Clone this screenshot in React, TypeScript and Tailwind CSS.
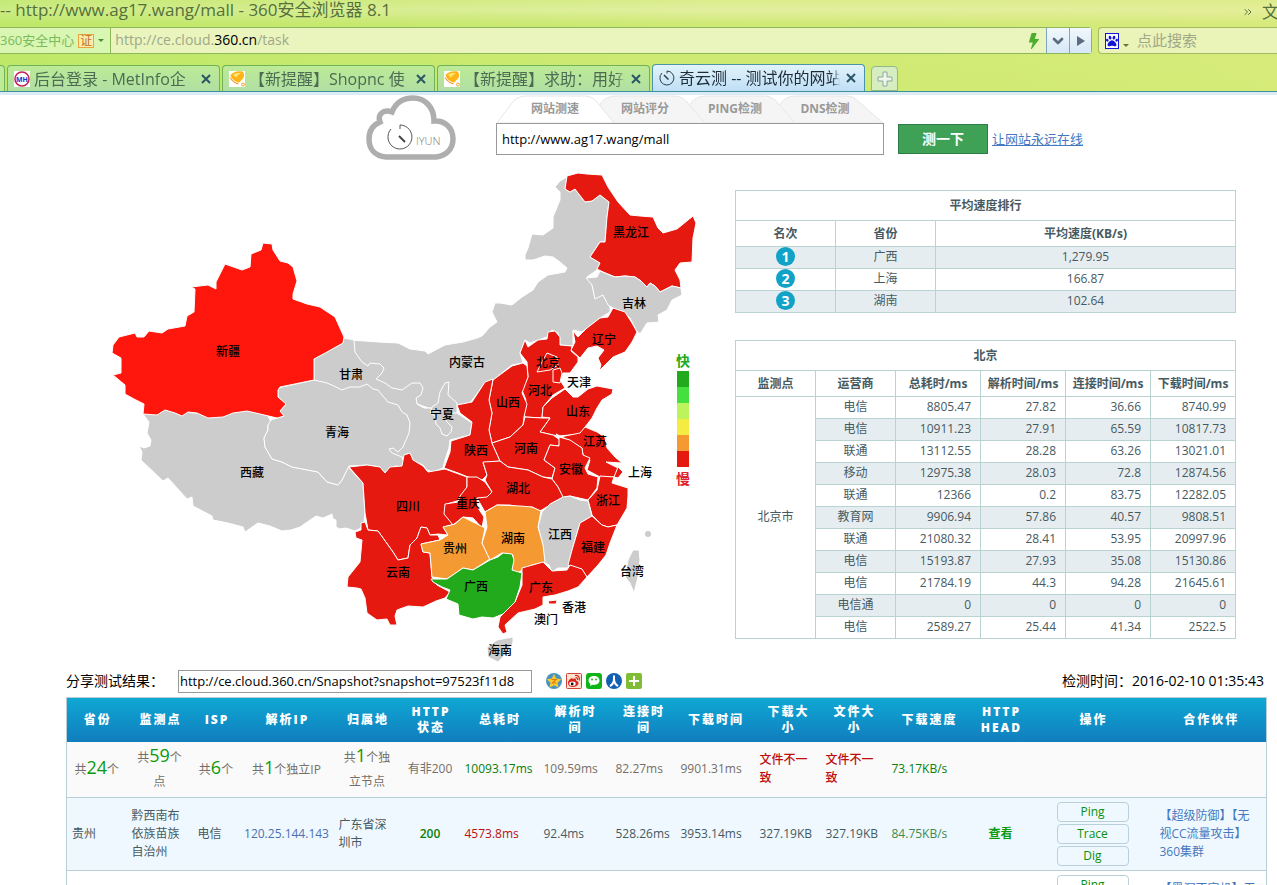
import type { ReactNode } from "react"
import { FaPaw } from "react-icons/fa"
import { BsLightningFill } from "react-icons/bs"
import { ChevronDown, ChevronsRight } from "lucide-react"

const RED = "#e61910"
const GRAY = "#cccccc"
const ORANGE = "#f59a32"
const GREEN = "#22aa1c"

// order matters: later provinces are painted over earlier ones
const provinces = [
  { id: "内蒙古", fill: GRAY, points: "344,340 365,341 378,342 398,343 410,349 425,351 428,354 445,345 463,342 477,338 482,336 490,327 497,322 492,312 495,303 500,303 512,305 522,297 533,290 538,282 548,275 565,272 567,268 560,262 553,257 545,256 533,260 525,260 525,255 528,248 532,234 543,235 553,228 553,217 560,200 560,192 555,187 560,181 567,177 565,189 570,192 575,189 578,193 585,202 592,201 600,195 609,202 607,217 605,242 600,242 590,257 600,263 597,270 587,277 592,285 595,297 603,295 610,307 610,312 600,318 582,332 573,330 573,346 560,345 558,333 552,330 547,337 530,343 525,340 520,353 523,363 512,365 497,377 493,380 485,383 470,403 458,405 440,412 420,405 400,395 370,380 354,360" },
  { id: "甘肃", fill: GRAY, points: "314,359 327,352 343,343 344,338 354,340 355,352 362,362 368,366 370,363 380,364 384,368 382,373 376,379 385,383 392,388 402,390 412,383 420,383 423,388 421,395 416,398 417,404 424,408 432,408 446,410 457,404 457,413 472,423 470,435 450,440 449,448 445,460 443,468 433,472 427,470 423,465 412,460 408,453 403,457 396,466 385,450 380,410 314,380" },
  { id: "西藏", fill: GRAY, points: "143,414 165,410 182,412 208,414 247,409 268,416 271,422 268,425 268,430 264,438 265,447 272,459 282,462 292,467 318,472 327,482 338,485 342,480 348,467 363,483 365,513 364,522 361,528 355,531 346,528 340,529 336,527 336,520 333,519 332,514 323,518 316,516 300,527 291,530 282,531 270,526 258,523 245,532 243,527 228,523 213,520 212,516 193,506 192,497 187,499 178,489 168,478 163,481 141,460 142,452 139,446 144,448 150,446 151,440 147,433 149,422" },
  { id: "青海", fill: GRAY, points: "314,380 327,383 334,386 342,390 350,387 360,387 367,384 373,389 378,390 382,395 388,402 398,405 402,412 407,415 410,423 409,433 403,447 398,452 393,448 389,449 392,453 402,457 404,463 402,467 395,466 385,473 380,467 367,465 349,466 342,480 338,485 327,482 318,472 292,467 282,462 272,459 265,447 264,438 268,430 268,425 271,420 284,416 280,411 286,404 278,397 278,389 282,387" },
  { id: "宁夏", fill: GRAY, points: "445,383 449,382 448,395 457,403 457,413 450,413 445,417 447,422 452,427 451,432 447,436 442,434 440,428 436,424 435,416 430,413 432,407 438,403 440,392" },
  { id: "新疆", fill: "#ff160d", points: "263,243 272,244 273,250 280,261 288,263 293,267 297,281 293,294 293,299 307,304 320,307 335,317 344,337 343,343 327,352 314,359 314,380 280,387 278,390 278,397 286,404 280,411 284,416 277,418 260,414 247,411 233,413 223,417 208,418 197,413 188,412 182,416 175,413 165,410 157,415 143,414 144,404 134,399 125,394 125,385 113,375 121,373 121,358 112,353 113,345 119,337 135,333 137,337 144,337 149,331 162,333 168,329 185,326 187,316 194,312 195,289 191,287 208,285 216,289 216,282 225,264 242,270 250,267 251,254 261,250" },
  { id: "黑龙江", fill: RED, points: "567,176 578,173 587,174 602,175 608,187 618,202 630,215 640,216 653,217 658,228 663,233 677,229 693,216 696,223 693,238 692,262 680,263 675,270 680,280 681,288 672,286 660,292 655,286 650,283 647,287 641,281 635,277 625,276 615,277 603,272 597,269 600,263 590,257 600,242 605,242 607,217 609,202 600,195 592,201 585,202 578,193 575,189 570,192 565,189" },
  { id: "吉林", fill: GRAY, points: "600,271 615,277 625,276 635,277 641,281 647,287 650,283 655,286 660,292 672,286 681,288 682,295 672,300 667,310 658,315 659,322 647,323 640,334 636,330 630,318 623,312 613,308 608,305 603,295 595,299 592,285 586,278 597,277" },
  { id: "辽宁", fill: RED, points: "613,308 625,312 632,323 637,332 632,342 625,352 613,357 599,371 601,365 598,358 604,350 597,346 588,348 580,358 571,350 575,342 573,331 578,337 587,328 600,318 608,317" },
  { id: "河北", fill: RED, points: "525,340 528,347 538,340 547,339 548,332 555,331 560,337 560,345 572,346 571,351 578,357 578,362 570,373 563,373 560,380 565,388 553,395 543,407 542,418 525,417 523,410 526,400 522,390 528,377 527,362 520,353" },
  { id: "北京", fill: RED, points: "547,353 543,360 537,372 550,370 558,365 557,357" },
  { id: "天津", fill: RED, points: "553,370 560,368 562,373 560,383 553,382" },
  { id: "山西", fill: RED, points: "523,363 527,366 528,377 522,393 527,404 524,417 523,425 510,437 492,443 489,430 492,413 489,400 493,380 497,377 512,366" },
  { id: "陕西", fill: RED, points: "493,379 485,382 472,402 457,405 460,413 472,422 470,435 451,441 450,452 444,468 458,473 468,477 482,480 487,475 483,463 500,461 492,443 489,430 492,413 489,400" },
  { id: "山东", fill: RED, points: "543,407 552,398 565,389 573,397 578,397 588,389 597,386 613,389 612,394 602,400 597,408 592,418 585,427 580,435 570,435 558,436 553,435 540,432 550,418 542,417" },
  { id: "河南", fill: RED, points: "525,417 542,418 550,418 540,432 553,435 560,440 559,446 550,445 544,460 555,468 552,478 543,477 528,470 508,467 500,461 492,443 510,437 523,425" },
  { id: "江苏", fill: RED, points: "556,434 560,437 580,433 585,427 597,432 605,437 607,448 615,457 622,463 606,462 618,468 615,477 600,477 587,470 590,460 583,455 582,448 570,441" },
  { id: "安徽", fill: RED, points: "559,437 570,440 582,448 583,455 590,458 585,468 588,474 598,477 597,488 588,500 570,496 563,498 558,487 552,479 555,468 544,460 550,445 559,446" },
  { id: "湖北", fill: RED, points: "483,462 500,461 508,467 528,470 543,477 552,479 558,487 563,497 555,502 540,511 532,507 523,508 510,505 497,505 485,512 477,498 492,492 485,480 487,475" },
  { id: "四川", fill: RED, points: "349,467 367,465 380,467 385,473 390,467 402,466 404,455 410,453 413,460 423,466 428,472 445,469 467,477 467,487 460,500 447,504 445,513 452,520 452,525 443,527 448,535 438,534 430,535 427,528 421,527 417,538 410,545 408,558 398,560 393,552 378,531 368,530 365,513 363,483" },
  { id: "重庆", fill: RED, points: "467,477 477,477 485,482 492,492 487,497 477,498 478,508 484,517 482,528 473,518 463,517 453,525 444,514 445,504 458,502 460,496 467,487" },
  { id: "浙江", fill: RED, points: "600,476 614,477 612,483 628,488 628,496 627,508 617,525 608,527 602,525 592,515 588,500 597,490" },
  { id: "上海", fill: RED, points: "618,467 623,472 618,478 614,477" },
  { id: "江西", fill: GRAY, points: "563,497 570,496 580,500 588,501 592,516 580,523 575,540 572,550 568,568 558,568 552,572 549,565 543,562 543,545 538,527 542,512 550,504" },
  { id: "福建", fill: RED, points: "592,516 602,525 608,527 617,525 610,543 606,555 598,565 587,577 582,570 568,565 572,550 575,540 580,523" },
  { id: "云南", fill: RED, points: "361,523 365,522 368,530 378,531 393,552 398,560 408,558 410,545 417,538 421,527 427,528 430,535 438,535 440,540 421,544 423,552 430,553 432,577 437,585 450,592 445,598 436,601 423,607 408,606 397,610 395,616 397,625 390,625 387,619 377,620 367,613 365,598 361,589 357,588 347,587 348,577 360,562 362,540 356,538 355,532 361,530" },
  { id: "贵州", fill: ORANGE, points: "421,544 440,540 448,535 443,527 455,524 463,517 475,523 485,528 482,543 490,559 473,570 463,568 447,579 432,577 430,553 423,552" },
  { id: "湖南", fill: ORANGE, points: "485,512 497,505 520,506 532,507 541,511 538,527 543,545 545,562 532,565 522,570 516,574 512,570 513,555 502,553 490,560 482,543 487,527" },
  { id: "广东", fill: RED, points: "522,568 543,562 552,571 567,570 570,565 582,569 587,577 578,587 568,591 555,595 543,597 543,605 535,609 518,613 505,625 507,632 503,634 498,627 500,617 515,602 522,585" },
  { id: "广西", fill: GREEN, points: "431,579 447,579 463,568 473,570 490,560 498,557 503,553 512,554 514,560 512,570 522,573 520,587 515,602 503,614 493,618 482,617 473,619 459,615 458,604 446,599 450,590 442,587 433,582" },
  { id: "香港", fill: RED, points: "548,601 557,600 556,604 549,604" },
  { id: "澳门", fill: GRAY, points: "541,609 546,608 544,610" },
  { id: "海南", fill: GRAY, points: "513,637 513,643 505,655 498,662 488,657 487,647 497,640" },
  { id: "台湾", fill: GRAY, points: "633,550 639,550 640,560 638,577 634,593 630,583 625,577 628,560" },
]

const mapLabels: [string, number, number][] = [
  ["黑龙江", 631, 237], ["吉林", 634, 308], ["辽宁", 604, 344], ["新疆", 228, 356],
  ["甘肃", 351, 379], ["内蒙古", 467, 367], ["北京", 548, 367], ["天津", 579, 387],
  ["河北", 540, 395], ["山西", 508, 407], ["山东", 578, 416], ["宁夏", 442, 419],
  ["青海", 337, 437], ["西藏", 252, 477], ["陕西", 476, 455], ["河南", 526, 453],
  ["江苏", 595, 446], ["安徽", 571, 474], ["上海", 640, 477], ["湖北", 518, 493],
  ["浙江", 608, 505], ["四川", 408, 511], ["重庆", 468, 508], ["江西", 560, 539],
  ["湖南", 513, 543], ["贵州", 455, 553], ["福建", 593, 552], ["云南", 398, 577],
  ["广西", 476, 591], ["广东", 541, 592], ["台湾", 632, 576], ["香港", 574, 612],
  ["澳门", 546, 624], ["海南", 500, 655],
]

const legendColors = ["bg-[#22aa1c]", "bg-[#44e03e]", "bg-[#bdf45e]", "bg-[#f5ec42]", "bg-[#f59a32]", "bg-[#e61910]"]

const ranking = [
  ["广西", "1,279.95"],
  ["上海", "166.87"],
  ["湖南", "102.64"],
]

const beijing = [
  ["电信", "8805.47", "27.82", "36.66", "8740.99"],
  ["电信", "10911.23", "27.91", "65.59", "10817.73"],
  ["联通", "13112.55", "28.28", "63.26", "13021.01"],
  ["移动", "12975.38", "28.03", "72.8", "12874.56"],
  ["联通", "12366", "0.2", "83.75", "12282.05"],
  ["教育网", "9906.94", "57.86", "40.57", "9808.51"],
  ["联通", "21080.32", "28.41", "53.95", "20997.96"],
  ["电信", "15193.87", "27.93", "35.08", "15130.86"],
  ["电信", "21784.19", "44.3", "94.28", "21645.61"],
  ["电信通", "0", "0", "0", "0"],
  ["电信", "2589.27", "25.44", "41.34", "2522.5"],
]

const columns = [
  { title: "省份", width: "w-[60px]" },
  { title: "监测点", width: "w-[66px]" },
  { title: "ISP", width: "w-[47px]" },
  { title: "解析IP", width: "w-[94px]" },
  { title: "归属地", width: "w-[67px]" },
  { title: "HTTP 状态", width: "w-[59px]" },
  { title: "总耗时", width: "w-[79px]" },
  { title: "解析时间", width: "w-[72px]" },
  { title: "连接时间", width: "w-[65px]" },
  { title: "下载时间", width: "w-[79px]" },
  { title: "下载大小", width: "w-[66px]" },
  { title: "文件大小", width: "w-[66px]" },
  { title: "下载速度", width: "w-[84px]" },
  { title: "HTTP HEAD", width: "w-[60px]" },
  { title: "操作", width: "w-[124px]" },
  { title: "合作伙伴", width: "w-[112px]" },
]

function BellIcon() {
  return (
    <svg viewBox="0 0 16 16" className="size-4 shrink-0" aria-hidden="true">
      <rect width="16" height="16" fill="#fff" />
      <path d="M1.500 4 C4 1 9 -.5 14 .8 C15.500 3 15.500 6.500 13 8.500 C11.500 10 11 11.500 9.500 11.500 C6 10.500 2.500 8 1.500 4 Z" fill="#fcb514" />
      <path d="M4 4 C6 2 9 1.500 12 2.500 C10 3.500 8 5 7 6.500 Z" fill="#ffe070" />
      <path d="M1 6.500 C3 10 6 12 9.500 12.800" stroke="#f0a03c" strokeWidth="1.2" fill="none" />
      <circle cx="14" cy="13.500" r="1.500" fill="none" stroke="#f5a623" />
    </svg>
  )
}

function MetInfoIcon() {
  return (
    <svg viewBox="0 0 16 16" className="size-4 shrink-0" aria-hidden="true">
      <rect width="16" height="16" fill="#fff" />
      <circle cx="8" cy="8" r="7" fill="#fff" stroke="#c41f52" strokeWidth="1.5" />
      <text x="8" y="10.5" textAnchor="middle" fontSize="7" fontWeight="700" fill="#1a2fd0">MH</text>
    </svg>
  )
}

function DialIcon() {
  return (
    <svg viewBox="0 0 16 16" className="size-4 shrink-0" fill="none" stroke="#2c3c4c" aria-hidden="true">
      <path d="M8 3.5 V1 A7 7 0 1 1 3 3" />
      <path d="M5 5 L9.5 9.5" strokeWidth="1.5" />
    </svg>
  )
}

function BrowserTab({ icon, title, active }: { icon: ReactNode; title: string; active?: boolean }) {
  return (
    <div
      className={
        active
          ? "flex h-[27px] w-[213px] min-w-0 items-center gap-1 rounded-t border border-b-0 border-[#4b93a9] bg-linear-to-b from-[#e2f3fb] to-[#bfdff5] px-1.5 text-[#1c2c3a]"
          : "flex h-[26px] w-[213px] min-w-0 items-center gap-1 rounded-t border border-b-0 border-[#6fb25a] bg-linear-to-b from-[#bdeb96] to-[#b0dfa3] px-1.5 text-[#4c6b52]"
      }
    >
      {icon}
      <span className="min-w-0 flex-1 overflow-hidden text-base leading-6 whitespace-nowrap mask-r-from-95%">{title}</span>
      <button aria-label="关闭" className="w-3.5 shrink-0 pl-0.5">
        <svg viewBox="0 0 10 10" className="size-2.5" stroke="#2b5566" strokeWidth="2"><path d="M1 1 L9 9 M9 1 L1 9" /></svg>
      </button>
    </div>
  )
}

function BrowserChrome() {
  return (
    <header className="shrink-0 bg-[linear-gradient(90deg,rgba(170,230,90,0.45),rgba(205,235,110,0.15)_55%,rgba(225,235,130,0.4)),linear-gradient(180deg,#dcec90_0px,#e6f0a8_10px,#cfe976_24px,#cfea74_60px,#cdea70_95px)]">
      <div className="flex h-[27px] items-start justify-between overflow-hidden text-[#55703c]">
        <div className="text-[17px] leading-5 whitespace-pre">-- http://www.ag17.wang/mall - 360安全浏览器 8.1</div>
        <div className="-mr-0.5 flex items-center gap-2 text-[17px] leading-6">
          <ChevronsRight className="size-3" />
          <span>文</span>
        </div>
      </div>
      <div className="flex h-[27px]">
        <div className="flex min-w-0 flex-1 rounded-r-sm border border-l-0 border-[#8db85a] bg-[#eaf4bd]">
          <button className="flex shrink-0 items-center gap-1 border-r border-[#8db85a] bg-[#d9f6b2] pr-1.5 text-[13px] text-[#7cbb5c]">
            360安全中心
            <span className="border border-[#e8a33c] bg-[#fdeeb0] px-px text-xs leading-3 text-[#c0701c]">证</span>
            <span className="border-x-3 border-t-3 border-x-transparent border-t-[#4c8b3c]" />
          </button>
          <div className="flex-1 px-1 text-sm leading-6 text-[#9fa88a]">
            http://ce.cloud.<span className="font-medium text-black">360.cn</span>/task
          </div>
          <BsLightningFill className="mr-1 ml-1.5 size-4 self-center text-[#4cae2c]" />
          <button aria-label="历史" className="flex w-[23px] items-center justify-center border-l border-[#7fa7c4] bg-linear-to-b from-[#f2f8fd] to-[#d6e7f5]">
            <ChevronDown className="size-4 text-[#5b6b80]" strokeWidth={4} />
          </button>
          <button aria-label="转到" className="flex w-[22px] items-center justify-center border-l border-[#7fa7c4] bg-linear-to-b from-[#f2f8fd] to-[#d6e7f5]">
            <span className="border-y-5 border-l-8 border-y-transparent border-l-[#5b6b80]" />
          </button>
        </div>
        <div className="ml-1.5 flex w-[179px] items-center gap-1 rounded-l-sm border border-r-0 border-[#a3bb62] bg-[#eaf3b8] pl-1.5">
          <span className="flex size-4 items-center justify-center border border-[#1414d8] bg-white">
            <FaPaw className="size-3 text-[#1414d8]" />
          </span>
          <span className="self-end pb-1.5"><span className="block border-x-3 border-t-3 border-x-transparent border-t-[#66733c]" /></span>
          <input
            aria-label="搜索"
            placeholder="点此搜索"
            className="w-full min-w-0 bg-transparent pl-1 text-[15px] outline-none placeholder:text-[#a0a888]"
          />
        </div>
      </div>
      <div className="flex h-[38px] items-end gap-0.5 border-b border-[#3f8f9c]">
        <div className="h-[26px] w-[5px] rounded-tr border-t border-r border-[#6fb25a] bg-[#bdeb96]" />
        <BrowserTab icon={<MetInfoIcon />} title="后台登录 - MetInfo企" />
        <BrowserTab icon={<BellIcon />} title="【新提醒】Shopnc 使" />
        <BrowserTab icon={<BellIcon />} title="【新提醒】求助：用好" />
        <BrowserTab icon={<DialIcon />} title="奇云测 -- 测试你的网站" active />
        <button aria-label="新标签" className="ml-1 flex h-[25px] w-[27px] items-center justify-center rounded-t border border-[#8fb88c] bg-[#d6edc0]">
          <svg viewBox="0 0 16 16" className="size-4" fill="#eef6e8" stroke="#8ca8a0"><path d="M6 1 H10 V6 H15 V10 H10 V15 H6 V10 H1 V6 H6 Z" /></svg>
        </button>
      </div>
      <div className="h-[3px] bg-[#dcecf4]" />
    </header>
  )
}

function SearchHeader() {
  return (
    <div className="flex h-[65px] pl-[300px]">
      <svg viewBox="0 0 90 65" className="h-[65px] w-[90px] shrink-0" fill="none" aria-label="奇云">
        <path d="M20 62 C8 61 3 53 3 44 C3 36 7 30 14 27 C11 19 18 14 26 17 C30 7 38 3 47 3 C59 3 68 12 68 26 C79 25 87 33 87 44 C87 55 79 61 70 62 Z" stroke="#aeaeae" strokeWidth="5.5" />
        <path d="M34 34 V30 A12 12 0 1 1 25 34" stroke="#555" />
        <path d="M33 41 L39 47" stroke="#444" strokeWidth="2" />
        <text x="50" y="50" fontSize="11" fill="#777" fontWeight="300">IYUN</text>
      </svg>
      <div className="ml-10 w-[388px] shrink-0">
        <nav className="relative h-7">
          <svg viewBox="0 0 388 28" className="absolute inset-0 h-7 w-[388px]" fill="#f5f5f5" stroke="#e6e6e6">
            <path d="M272 28 L285 8 Q290 1 300 1 H350 Q358 1 363 7 L387 28 Z" />
            <path d="M185 28 L195 8 Q200 1 210 1 H268 Q276 1 281 7 L299 28 Z" />
            <path d="M95 28 L105 8 Q110 1 120 1 H178 Q186 1 191 7 L209 28 Z" />
            <path d="M1 28 L16 8 Q21 1 31 1 H88 Q96 1 101 7 L118 28 Z" fill="#fff" />
          </svg>
          <div className="relative flex pl-3.5 text-xs leading-7 font-bold text-[#999]">
            <a href="#speed" className="w-[90px] text-center">网站测速</a>
            <a href="#score" className="w-[90px] text-center">网站评分</a>
            <a href="#ping" className="w-[90px] text-center">PING检测</a>
            <a href="#dns" className="w-[90px] text-center">DNS检测</a>
          </div>
        </nav>
        <input
          aria-label="网址"
          defaultValue="http://www.ag17.wang/mall"
          className="block h-8 w-full border border-[#999] bg-white px-[5px] text-[13px] font-medium text-black outline-none"
        />
      </div>
      <button className="mt-[29px] ml-3.5 h-[30px] w-[90px] shrink-0 border border-[#2b7d45] bg-[#3ea156] text-sm font-bold text-white">测一下</button>
      <a href="#online" className="mt-[34px] ml-1 text-[13px] leading-5 whitespace-nowrap text-[#4678c0] underline">让网站永远在线</a>
    </div>
  )
}

function ChinaMap() {
  return (
    <div className="relative ml-[34px] w-[600px] shrink-0">
      <svg viewBox="100 160 600 505" className="block h-[505px] w-[600px]">
        <g stroke="#fff" strokeLinejoin="round">
          {provinces.map((p) => (
            <polygon key={p.id} points={p.points} fill={p.fill} />
          ))}
        </g>
        <circle cx="648" cy="534" r="3" fill={GRAY} />
        <g fontSize="12" textAnchor="middle" fontWeight="500">
          {mapLabels.map(([name, x, y]) => (
            <text key={name} x={x} y={y}>{name}</text>
          ))}
        </g>
      </svg>
      <div className="absolute top-[193px] left-[575px] flex w-4 flex-col items-center text-sm leading-4 font-bold">
        <span className="text-[#22aa1c]">快</span>
        <div className="mt-0.5 mb-1 w-3">
          {legendColors.map((c) => (
            <div key={c} className={`h-4 ${c}`} />
          ))}
        </div>
        <span className="text-[#e0242c]">慢</span>
      </div>
    </div>
  )
}

function SpeedTables() {
  return (
    <div className="mt-[30px] mr-[30px] ml-[35px] min-w-0 flex-1 text-xs leading-4 text-[#465a62]">
      <table className="w-full table-fixed border-collapse text-center [&_td]:border [&_td]:border-[#b9d3d3] [&_td]:pt-0 [&_td]:pb-0.5 [&_th]:border [&_th]:border-[#b9d3d3]">
        <colgroup>
          <col className="w-1/5" />
          <col className="w-1/5" />
          <col />
        </colgroup>
        <thead>
          <tr className="h-[30px]"><th colSpan={3}>平均速度排行</th></tr>
          <tr className="h-[26px]"><th>名次</th><th>省份</th><th>平均速度(KB/s)</th></tr>
        </thead>
        <tbody>
          {ranking.map(([name, speed], i) => (
            <tr key={name} className="h-[22px] odd:bg-[#e6edf0]">
              <td>
                <span className="mx-auto flex size-[19px] items-center justify-center rounded-full bg-[#12a2c8] text-sm font-bold text-white">{i + 1}</span>
              </td>
              <td>{name}</td>
              <td>{speed}</td>
            </tr>
          ))}
        </tbody>
      </table>

      <table className="mt-[27px] w-full table-fixed border-collapse [&_td]:border [&_td]:border-[#b9d3d3] [&_td]:pt-0 [&_td]:pb-0.5 [&_th]:border [&_th]:border-[#b9d3d3]">
        <colgroup>
          <col className="w-[16%]" />
          <col className="w-[16%]" />
          <col className="w-[17%]" />
          <col className="w-[17%]" />
          <col className="w-[17%]" />
          <col className="w-[17%]" />
        </colgroup>
        <thead>
          <tr className="h-[30px]"><th colSpan={6}>北京</th></tr>
          <tr className="h-[26px] whitespace-nowrap">
            <th>监测点</th><th>运营商</th><th>总耗时/ms</th><th>解析时间/ms</th><th>连接时间/ms</th><th>下载时间/ms</th>
          </tr>
        </thead>
        <tbody>
          {beijing.map(([isp, ...values], i) => (
            <tr key={i} className="h-[22px] even:bg-[#e6edf0]">
              {i === 0 && <td rowSpan={beijing.length} className="bg-white text-center">北京市</td>}
              <td className="text-center">{isp}</td>
              {values.map((v, j) => (
                <td key={j} className="pr-[9px] text-right">{v}</td>
              ))}
            </tr>
          ))}
        </tbody>
      </table>
    </div>
  )
}

function ShareBar() {
  return (
    <div className="flex h-8 items-center text-sm leading-5 text-black">
      <label htmlFor="share" className="w-28 shrink-0">分享测试结果：</label>
      <input
        id="share"
        readOnly
        defaultValue="http://ce.cloud.360.cn/Snapshot?snapshot=97523f11d8"
        className="h-[23px] w-[354px] shrink-0 border border-[#999] bg-white px-px text-[13px] font-medium outline-none"
      />
      <div className="ml-3.5 flex gap-1">
        <a href="#qzone" aria-label="QQ空间">
          <svg viewBox="0 0 16 16" className="size-4">
            <circle cx="8" cy="8" r="8" fill="#4a94c4" />
            <path d="M8 1 L10.2 5.6 L15.2 6.2 L11.5 9.7 L12.5 14.6 L8 12.2 L3.5 14.6 L4.5 9.7 L.8 6.2 L5.8 5.6 Z" fill="#fdca2c" />
            <path d="M5.5 6.5 H10 L6.5 10 H10.5" fill="none" stroke="#e07b12" strokeWidth="1.2" />
          </svg>
        </a>
        <a href="#weibo" aria-label="新浪微博">
          <svg viewBox="0 0 16 16" className="size-4">
            <rect x=".5" y=".5" width="15" height="15" rx="1" fill="#fbe3d2" stroke="#cf4434" />
            <path d="M2 10 C2 7 6 4 7 6 C10 5 10 6 10 7.5 C15 9 12 14 7 14 C4 14 2 12.5 2 10 Z" fill="#d8281c" />
            <ellipse cx="6.5" cy="10.8" rx="3.2" ry="2.2" fill="#fff" />
            <circle cx="6.2" cy="11" r="1.4" fill="#111" />
            <path d="M9 2.5 C12.5 2 14 4.5 13.3 7.5 M9.5 4.7 C11 4.5 11.8 5.5 11.5 7" fill="none" stroke="#d8281c" strokeWidth="1.2" />
          </svg>
        </a>
        <a href="#wechat" aria-label="微信">
          <svg viewBox="0 0 16 16" className="size-4">
            <rect width="16" height="16" rx="3" fill="#0fb516" />
            <path d="M8 3 C4.700 3 2.500 5 2.500 7.500 C2.500 9 3.300 10.200 4.500 11 L4 13 L6.300 11.800 C10.500 12.500 13.500 10.300 13.500 7.500 C13.500 5 11.200 3 8 3 Z" fill="#fff" />
            <circle cx="6" cy="6.500" r=".9" fill="#0fb516" />
            <circle cx="10" cy="6.500" r=".9" fill="#0fb516" />
          </svg>
        </a>
        <a href="#renren" aria-label="人人网">
          <svg viewBox="0 0 16 16" className="size-4">
            <circle cx="8" cy="8" r="8" fill="#125fb4" />
            <path d="M8 2.500 V6 C8 9.500 6.500 11.500 4 13.200 M8 6 C8 9.500 9.500 11.500 12 13.200" fill="none" stroke="#fff" strokeWidth="2" />
          </svg>
        </a>
        <a href="#more" aria-label="更多">
          <svg viewBox="0 0 16 16" className="size-4">
            <rect width="16" height="16" rx="2" fill="#7fbd34" />
            <path d="M8 3 V13 M3 8 H13" stroke="#fff" strokeWidth="2" />
          </svg>
        </a>
      </div>
      <span className="ml-auto pr-0.5 whitespace-nowrap">检测时间：2016-02-10 01:35:43</span>
    </div>
  )
}

function Total({ count, unit }: { count: number; unit: string }) {
  return (
    <>
      共<span className="text-lg leading-5 font-medium text-[#0a9a0a]">{count}</span>{unit}
    </>
  )
}

function Actions() {
  return (
    <div className="mx-auto flex w-[72px] flex-col gap-0.5">
      {["Ping", "Trace", "Dig"].map((name) => (
        <button key={name} className="h-5 rounded border border-[#b9cfdc] leading-4 font-medium text-[#0a8f0a]">{name}</button>
      ))}
    </div>
  )
}

function ResultTable() {
  return (
    <table className="w-full table-fixed border-collapse border border-[#b9cfd8] text-xs leading-[18px] text-[#465a62] [&_td]:px-[5px] [&_td]:py-0">
      <colgroup>
        {columns.map((c) => (
          <col key={c.title} className={c.width} />
        ))}
      </colgroup>
      <thead>
        <tr className="h-11 bg-linear-to-b from-[#0fa8d3] to-[#117dbe] leading-4 tracking-[2px] text-white">
          {columns.map((c) => (
            <th key={c.title} className="pr-2 pl-2.5 font-extrabold">{c.title}</th>
          ))}
        </tr>
      </thead>
      <tbody className="[&>tr]:border-b [&>tr]:border-[#b9cfd8]">
        <tr className="h-14 bg-[#fafafa] text-[#756f68]">
          <td className="text-center leading-6"><Total count={24} unit="个" /></td>
          <td className="text-center leading-6"><Total count={59} unit="个点" /></td>
          <td className="text-center leading-6 whitespace-nowrap"><Total count={6} unit="个" /></td>
          <td className="text-center leading-6"><Total count={1} unit="个独立IP" /></td>
          <td className="text-center leading-6"><Total count={1} unit="个独立节点" /></td>
          <td className="text-center whitespace-nowrap">有非200</td>
          <td className="font-medium text-[#0a800a]">10093.17ms</td>
          <td>109.59ms</td>
          <td>82.27ms</td>
          <td>9901.31ms</td>
          <td className="font-medium text-[#c00c0c]">文件不一致</td>
          <td className="font-medium text-[#c00c0c]">文件不一致</td>
          <td className="font-medium text-[#0a800a]">73.17KB/s</td>
          <td />
          <td />
          <td />
        </tr>
        <tr className="h-[73px] bg-[#eff8fe]">
          <td>贵州</td>
          <td>黔西南布依族苗族自治州</td>
          <td>电信</td>
          <td className="whitespace-nowrap"><a href="#ip" className="-mx-1 block text-center text-[#4a70b0]">120.25.144.143</a></td>
          <td>广东省深圳市</td>
          <td className="text-center font-semibold text-[#0a800a]">200</td>
          <td className="font-medium text-[#c00c0c]">4573.8ms</td>
          <td>92.4ms</td>
          <td>528.26ms</td>
          <td>3953.14ms</td>
          <td className="whitespace-nowrap">327.19KB</td>
          <td className="whitespace-nowrap">327.19KB</td>
          <td className="font-medium text-[#3d8a50]">84.75KB/s</td>
          <td className="text-center"><a href="#head" className="font-bold text-[#0a9a0a]">查看</a></td>
          <td><Actions /></td>
          <td><a href="#partner" className="text-[#4678c0]">【超级防御】【无视CC流量攻击】360集群</a></td>
        </tr>
        <tr className="h-[73px] bg-white">
          <td colSpan={14} />
          <td><Actions /></td>
          <td><a href="#partner2" className="text-[#4678c0]">【黑洞不宕机】无视CC流量攻击360集群</a></td>
        </tr>
      </tbody>
    </table>
  )
}

export default function App() {
  return (
    <div className="flex h-screen flex-col overflow-hidden bg-white font-['Open_Sans','Noto_Sans_CJK_SC',sans-serif]">
      <BrowserChrome />
      <main className="min-h-0 flex-1 overflow-hidden pr-[11px] pl-[66px]">
        <SearchHeader />
        <div className="flex">
          <ChinaMap />
          <SpeedTables />
        </div>
        <ShareBar />
        <ResultTable />
      </main>
    </div>
  )
}
